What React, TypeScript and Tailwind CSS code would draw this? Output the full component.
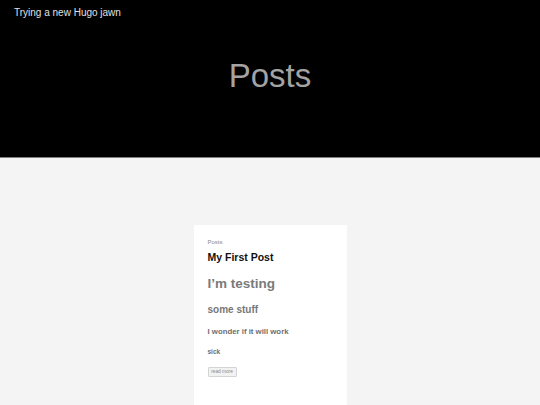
export default function App() {
  return (
    <div className="min-h-screen bg-[#f4f4f4] font-['Liberation_Sans',Arial,sans-serif]">
      <header className="h-[158px] bg-black border-b border-[#808080] flex flex-col">
        <div className="pl-[14px] pt-[8px] text-[10px] leading-none text-[#e0e0e0]">Trying a new Hugo jawn</div>
        <h1 className="mt-[41px] text-center text-[33px] leading-none text-[#a3a3a3]">Posts</h1>
      </header>

      <main className="pt-[67px]">
        <article className="mx-auto w-[153px] h-[260px] bg-white px-[14px] pt-[14px] flex flex-col items-start">
          <div className="text-[6px] leading-none text-[#8a8a8a]">Posts</div>
          <h2 className="mt-[7px] text-[10.5px] leading-none font-bold text-[#111]">My First Post</h2>
          <h1 className="mt-[14px] text-[13.5px] leading-none font-bold text-[#7a7a7a]">I’m testing</h1>
          <h2 className="mt-[15px] text-[10px] leading-none font-bold text-[#777]">some stuff</h2>
          <h3 className="mt-[13px] text-[7.8px] leading-none font-bold text-[#6e6e6e]">I wonder if it will work</h3>
          <h4 className="mt-[13px] text-[6.5px] leading-none font-bold text-[#6e6e6e]">sick</h4>
          <button className="mt-[12px] h-[10px] w-[29px] flex items-center justify-center rounded-[1px] border border-[#d4d4d4] bg-[#f2f2f2] text-[4.75px] leading-none text-[#8a8a8a]">
            read more
          </button>
        </article>
      </main>
    </div>
  );
}
